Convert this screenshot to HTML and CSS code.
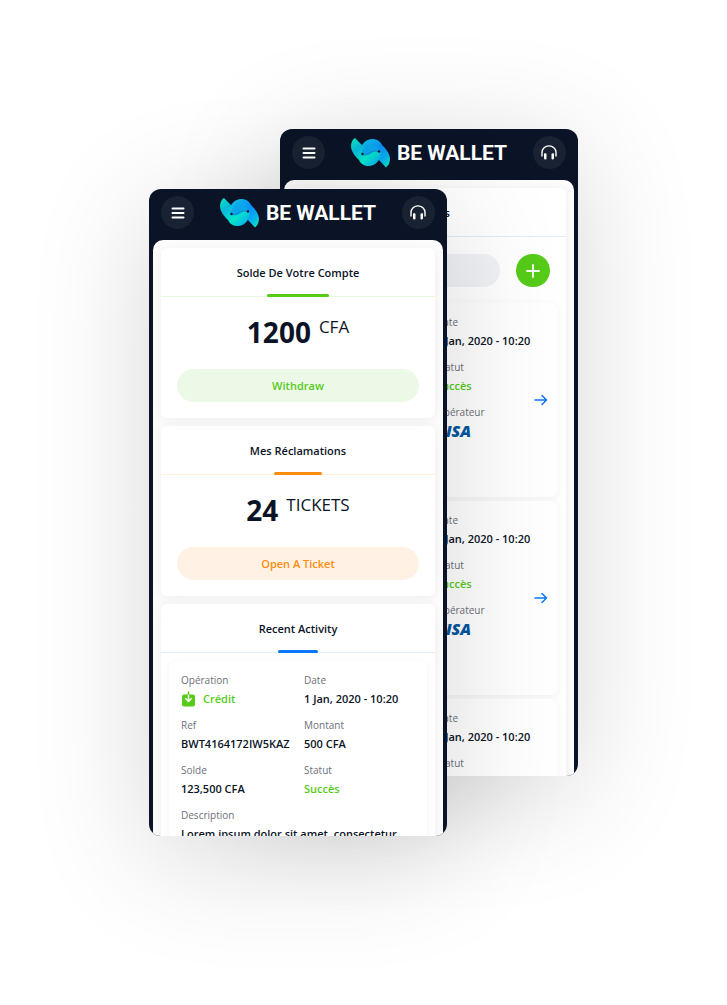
FILE: index.html
```html
<!DOCTYPE html>
<html lang="fr">
<head>
<meta charset="utf-8">
<meta name="viewport" content="width=device-width, initial-scale=1">
<title>Be Wallet</title>
<link rel="stylesheet" href="styles.css">
</head>
<body>
<svg class="defs" aria-hidden="true">
  <defs>
    <linearGradient id="ribbonTop" x1="0" y1="0" x2="1" y2="1">
      <stop offset="0" stop-color="#0cc6dc"/><stop offset=".5" stop-color="#0a90f8"/><stop offset=".75" stop-color="#08b0ee"/><stop offset="1" stop-color="#06f2b4"/>
    </linearGradient>
    <linearGradient id="ribbonBottom" x1="0" y1="0" x2="1" y2="1">
      <stop offset="0" stop-color="#06eab8"/><stop offset=".3" stop-color="#08b8dc"/><stop offset=".6" stop-color="#06e8c8"/><stop offset="1" stop-color="#0a9cf8"/>
    </linearGradient>
    <symbol id="logo" viewBox="0 0 39 30">
      <path fill="url(#ribbonTop)" d="M9 14C10 6 15 1 21 1C26 1 29 3 31 7C34 10 39 15 39 21C39 25 37 28 35 29.500L26 20C28 18 29 16 28 14C25 12 22 16 19 18Z"/>
      <path fill="url(#ribbonBottom)" d="M30 15C29 23 24 28 18 28C13 28 10 26 8 22C5 19 0 14 0 8C0 4 2 1 4 0L13 9C11 11 10 14 11 16C14 17 17 13 20 11Z"/>
      <path fill="#0aa6ea" d="M11 16C12 10 17 7 21 7C25 7 28 10 28 13.500C24 11 20 17 16 17.500C14 17.800 12 17 11 16Z"/>
      <path fill="none" stroke="#0b78b8" stroke-width=".6" d="M11 16C15 19 19 11 28 13.500"/>
      <circle cx="11.500" cy="16" r="1.200" fill="#0a1a30"/>
      <circle cx="28" cy="13.500" r="1.200" fill="#0a1a30"/>
    </symbol>
    <symbol id="menu" viewBox="0 0 14 12">
      <path stroke="#fff" stroke-width="2" stroke-linecap="round" d="M1.500 1.500H12.500M1.500 6H12.500M1.500 10.500H12.500"/>
    </symbol>
    <symbol id="headset" viewBox="0 0 16 15">
      <path fill="none" stroke="#fff" stroke-width="1.400" stroke-linecap="round" d="M1 11V7.500C1 3.500 4.200.9 8 .9S15 3.500 15 7.500V11"/>
      <path fill="#fff" d="M3 9Q3 8.200 3.800 8.200H4.500Q5.500 8.200 5.500 9.200V13.500Q5.500 14.500 4.500 14.500Q3 14.500 3 13ZM13 9Q13 8.200 12.200 8.200H11.500Q10.500 8.200 10.500 9.200V13.500Q10.500 14.500 11.500 14.500Q13 14.500 13 13Z"/>
    </symbol>
    <symbol id="arrow" viewBox="0 0 14 12">
      <path fill="none" stroke="#0a78ff" stroke-width="1.500" stroke-linecap="round" stroke-linejoin="round" d="M1 6H12.500M8 1.500L12.500 6L8 10.500"/>
    </symbol>
  </defs>
</svg>

<main class="stage">
  <section class="phone phone-back">
    <header class="topbar">
      <button class="round" type="button" aria-label="Menu"><svg class="icon-menu"><use href="#menu"/></svg></button>
      <div class="brand"><svg class="brand-mark" aria-hidden="true"><use href="#logo"/></svg><span class="brand-name">BE WALLET</span></div>
      <button class="round" type="button" aria-label="Support"><svg class="icon-headset"><use href="#headset"/></svg></button>
    </header>
    <div class="screen">
      <article class="card blue">
        <h2 class="card-head"><span class="card-title">Retraits</span></h2>
        <div class="search">
          <input class="search-box" type="search" aria-label="Recherche">
          <button class="add" type="button" aria-label="Ajouter"><svg class="icon-plus" viewBox="0 0 14 14"><path stroke="#fff" stroke-width="1.800" stroke-linecap="round" d="M7 1V13M1 7H13"/></svg></button>
        </div>
        <div class="list">
          <div class="entry entry-tall">
            <dl class="fields">
              <div><dt>Opération</dt><dd class="ok">Crédit</dd></div><div><dt>Date</dt><dd>1 Jan, 2020 - 10:20</dd></div>
              <div><dt>Montant</dt><dd>500 CFA</dd></div><div><dt>Statut</dt><dd class="ok">Succès</dd></div>
              <div><dt>Solde</dt><dd>123,500 CFA</dd></div><div><dt>Opérateur</dt><dd class="visa">VISA</dd></div>
            </dl>
            <a class="go" href="#" aria-label="Détails"><svg class="icon-arrow"><use href="#arrow"/></svg></a>
          </div>
          <div class="entry entry-tall">
            <dl class="fields">
              <div><dt>Opération</dt><dd class="ok">Crédit</dd></div><div><dt>Date</dt><dd>1 Jan, 2020 - 10:20</dd></div>
              <div><dt>Montant</dt><dd>500 CFA</dd></div><div><dt>Statut</dt><dd class="ok">Succès</dd></div>
              <div><dt>Solde</dt><dd>123,500 CFA</dd></div><div><dt>Opérateur</dt><dd class="visa">VISA</dd></div>
            </dl>
            <a class="go" href="#" aria-label="Détails"><svg class="icon-arrow"><use href="#arrow"/></svg></a>
          </div>
          <div class="entry entry-tall">
            <dl class="fields">
              <div><dt>Opération</dt><dd class="ok">Crédit</dd></div><div><dt>Date</dt><dd>1 Jan, 2020 - 10:20</dd></div>
              <div><dt>Montant</dt><dd>500 CFA</dd></div><div><dt>Statut</dt><dd class="ok">Succès</dd></div>
            </dl>
          </div>
        </div>
      </article>
    </div>
  </section>

  <section class="phone phone-front">
    <header class="topbar">
      <button class="round" type="button" aria-label="Menu"><svg class="icon-menu"><use href="#menu"/></svg></button>
      <div class="brand"><svg class="brand-mark" aria-hidden="true"><use href="#logo"/></svg><span class="brand-name">BE WALLET</span></div>
      <button class="round" type="button" aria-label="Support"><svg class="icon-headset"><use href="#headset"/></svg></button>
    </header>
    <div class="screen">
      <article class="card green">
        <h2 class="card-head"><span class="card-title">Solde De Votre Compte</span></h2>
        <p class="figure"><strong>1200</strong><span>CFA</span></p>
        <button class="pill" type="button">Withdraw</button>
      </article>
      <article class="card orange">
        <h2 class="card-head"><span class="card-title">Mes Réclamations</span></h2>
        <p class="figure"><strong>24</strong><span>TICKETS</span></p>
        <button class="pill" type="button">Open A Ticket</button>
      </article>
      <article class="card blue">
        <h2 class="card-head"><span class="card-title">Recent Activity</span></h2>
        <div class="list list-spaced">
          <div class="entry">
            <dl class="fields">
              <div><dt>Opération</dt><dd class="ok credit"><svg class="icon-credit" viewBox="0 0 15 16" aria-hidden="true"><rect x="1" y="3.500" width="13" height="12" rx="2" fill="#56cb18"/><path stroke="#56cb18" stroke-width="1.500" stroke-linecap="round" d="M7.500 1V4"/><path fill="none" stroke="#fff" stroke-width="1.500" stroke-linecap="round" stroke-linejoin="round" d="M7.500 4.500V10M4.800 7.800L7.500 10.500L10.200 7.800"/></svg>Crédit</dd></div>
              <div><dt>Date</dt><dd>1 Jan, 2020 - 10:20</dd></div>
              <div><dt>Ref</dt><dd>BWT4164172IW5KAZ</dd></div><div><dt>Montant</dt><dd>500 CFA</dd></div>
              <div><dt>Solde</dt><dd>123,500 CFA</dd></div><div><dt>Statut</dt><dd class="ok">Succès</dd></div>
              <div class="wide"><dt>Description</dt><dd>Lorem ipsum dolor sit amet, consectetur</dd></div>
            </dl>
          </div>
        </div>
      </article>
    </div>
  </section>
</main>
</body>
</html>
```
FILE: styles.css
```css
* { box-sizing: border-box; }

body {
  margin: 0;
  background: #fff;
  color: #0b1426;
  font-family: "Open Sans", "Noto Sans", sans-serif;
  font-size: 11px;
}

h2, p, dl, dd { margin: 0; }

button, input { border: 0; padding: 0; font: inherit; }

svg { display: block; }

.defs { position: absolute; width: 0; height: 0; }

/* Two overlapping phones share one grid */
.stage {
  display: grid;
  grid-template-columns: 149fr 131fr 167fr 131fr 149fr;
  align-items: start;
  padding: 129px 0 168px;
  overflow: hidden;
}

.phone {
  grid-row: 1;
  min-width: 0;
  aspect-ratio: 298 / 647;
  overflow: hidden;
  border-radius: 12px;
  background: #0b1426;
  box-shadow: 0 20px 120px rgba(0, 0, 0, .16);
}

.phone-back { grid-column: 3 / 5; }
.phone-front { grid-column: 2 / 4; margin-top: 60px; }

.topbar {
  display: flex;
  align-items: center;
  justify-content: space-between;
  padding: 7px 12px 11px;
}

.round {
  display: grid;
  place-items: center;
  width: 33px;
  height: 33px;
  border-radius: 50%;
  background: #182232;
}

.icon-menu { width: 14px; height: 12px; }
.icon-headset { width: 16px; height: 15px; }
.icon-plus { width: 14px; height: 14px; }
.icon-arrow { width: 14px; height: 12px; }
.icon-credit { width: 15px; height: 16px; }

.brand { display: flex; align-items: center; gap: 7px; }
.brand-mark { width: 39px; height: 30px; }
.brand-name {
  color: #fff;
  font: 700 21px/30px Roboto, sans-serif;
  white-space: nowrap;
}

.screen {
  display: grid;
  gap: 8px;
  margin: 0 4px;
  padding: 8px;
  border-radius: 10px 10px 0 0;
  background: #fcfcfc;
}

.card {
  min-width: 0;
  border-radius: 6px;
  background: #fff;
  box-shadow: 0 2px 12px rgba(0, 0, 0, .06);
}

.green { --accent: #56cb18; --line: #e6f8dc; --tint: #edf9e7; }
.orange { --accent: #ff8c0f; --line: #fff1dd; --tint: #fff2e4; }
.blue { --accent: #0a78ff; --line: #dfecfc; --tint: #e6f1ff; }

.card-head {
  display: flex;
  justify-content: center;
  height: 49px;
  border-bottom: 1px solid var(--line);
  font-size: 11px;
  font-weight: 600;
  line-height: 49px;
}

.card-title {
  display: grid;
  grid-template-rows: 46px 3px;
  justify-items: center;
  height: 49px;
}

.card-title::after {
  content: "";
  width: 50%;
  height: 3px;
  border-radius: 2px;
  background: var(--accent);
}

.figure {
  display: flex;
  justify-content: center;
  gap: 8px;
  padding-top: 15px;
}

.figure strong { font-size: 28px; line-height: 40px; }
.figure span { font-size: 17px; line-height: 30px; }

.pill {
  display: block;
  width: calc(100% - 32px);
  height: 33px;
  margin: 17px 16px 16px;
  border-radius: 17px;
  background: var(--tint);
  color: var(--accent);
  font-weight: 600;
}

.search { display: flex; gap: 16px; padding: 17px 16px 16px; }
.search-box { flex: 1; min-width: 0; border-radius: 17px; background: #f1f2f5; }
.add {
  display: grid;
  place-items: center;
  width: 34px;
  height: 33px;
  border-radius: 17px;
  background: #56cb18;
}

.list { display: grid; gap: 4px; padding: 0 8px 8px; }
.list-spaced { padding-top: 8px; }

.entry {
  display: grid;
  align-items: center;
  padding: 10px 12px;
  border-radius: 8px;
  background: #fff;
  box-shadow: 0 2px 10px rgba(0, 0, 0, .05);
}

.entry-tall { min-height: 194px; padding-right: 10px; }

.fields {
  display: grid;
  grid-area: 1 / 1;
  align-self: start;
  grid-template-columns: 1fr 1fr;
  gap: 7px 12px;
}

.fields div { min-width: 0; white-space: nowrap; }
.wide { grid-column: 1 / 3; }

dt { color: #6c7079; font-size: 10px; line-height: 18px; }
dd { font-size: 11px; font-weight: 600; line-height: 20px; }

.ok { color: #56cb18; }
.credit { display: flex; align-items: center; gap: 7px; }
.visa { color: #00579f; font-size: 16px; font-style: italic; font-weight: 800; }

.go { grid-area: 1 / 1; justify-self: end; }
```
